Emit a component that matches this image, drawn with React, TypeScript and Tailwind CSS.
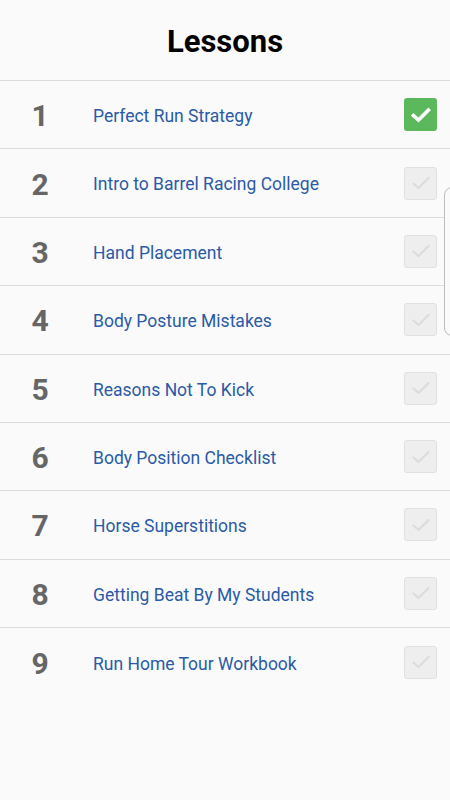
import React from "react";

const lessons = [
  "Perfect Run Strategy",
  "Intro to Barrel Racing College",
  "Hand Placement",
  "Body Posture Mistakes",
  "Reasons Not To Kick",
  "Body Position Checklist",
  "Horse Superstitions",
  "Getting Beat By My Students",
  "Run Home Tour Workbook",
];

function Check({ done }: { done: boolean }) {
  if (done) {
    return (
      <div className="w-[33px] h-[33px] rounded-[3px] bg-[#5cb85c] flex items-center justify-center">
        <svg width="20" height="16" viewBox="0 0 20 16">
          <path d="M2.5 8.5 L7.5 13 L17.5 3" fill="none" stroke="#fff" strokeWidth="3.6" strokeLinecap="square" strokeLinejoin="miter" />
        </svg>
      </div>
    );
  }
  return (
    <div className="w-[33px] h-[33px] rounded-[3px] bg-[#eeeeee] border border-[#e0e0e0] flex items-center justify-center">
      <svg width="20" height="16" viewBox="0 0 20 16">
        <path d="M2.5 8.5 L7.5 13 L17.5 3" fill="none" stroke="#dcdcdc" strokeWidth="2.2" strokeLinecap="round" strokeLinejoin="round" />
      </svg>
    </div>
  );
}

export default function App() {
  return (
    <div className="relative w-[450px] h-[800px] bg-[#fafafa] overflow-hidden" style={{ fontFamily: "Roboto, 'Noto Sans', sans-serif" }}>
      <div className="h-[81px] border-b border-[#dcdcdc] flex items-center justify-center">
        <h1 className="text-[31px] font-bold text-black leading-none mt-[3px]">Lessons</h1>
      </div>
      {lessons.map((t, i) => (
        <div
          key={t}
          className={`h-[68.375px] flex items-center ${i < lessons.length - 1 ? "border-b border-[#dcdcdc]" : ""}`}
        >
          <div className="w-[80px] text-center text-[30px] font-bold text-[#666666] leading-none mt-[3px]">{i + 1}</div>
          <div className="flex-1 pl-[13px] text-[17.5px] text-[#2a5aa6] mt-[3px]">{t}</div>
          <div className="pr-[13px]">
            <Check done={i === 0} />
          </div>
        </div>
      ))}
      <div className="absolute left-[444px] top-[187px] w-[20px] h-[149px] rounded-[8px] border border-[#bdbdbd] bg-[#fafafa]" />
    </div>
  );
}
